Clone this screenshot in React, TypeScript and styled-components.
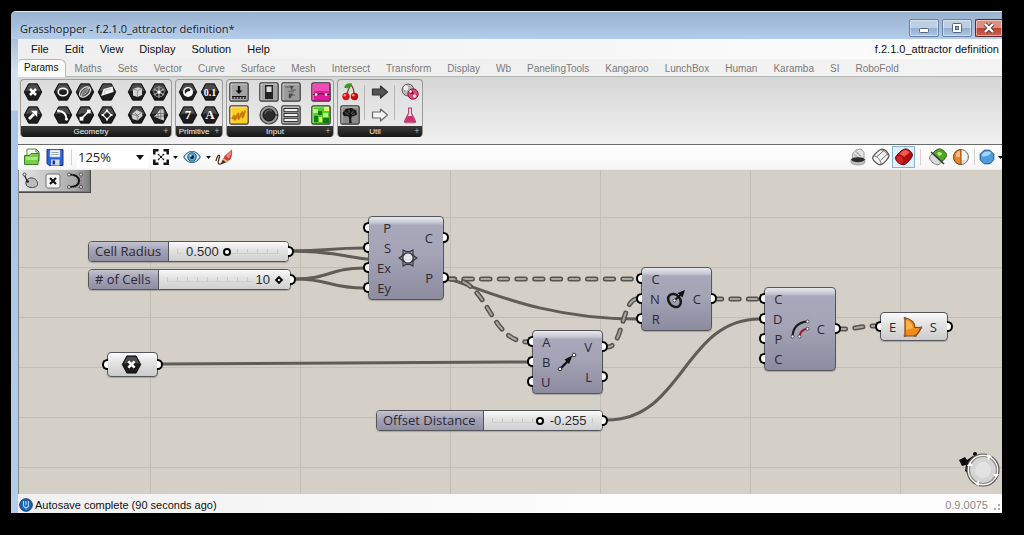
import React from "react";
import styled, { createGlobalStyle, css } from "styled-components";

const GlobalStyle = createGlobalStyle`
  *, *::before, *::after { box-sizing: border-box; }
  body { margin: 0; background: #000; }
  button, input, select, output { font: inherit; color: inherit; }
`;

const UI_FONT = `"Open Sans", "Noto Sans", sans-serif`;
const MENU_FONT = `"Liberation Sans", Arial, sans-serif`;

/* ---------- window frame ---------- */

const Desktop = styled.div`
  min-height: 100vh;
  display: flex;
  padding: 11px 22px 22px 11px;
  background: #000;
`;

const Window = styled.div`
  flex: 1;
  min-width: 0;
  display: flex;
  flex-direction: column;
  border-radius: 5px 0 0 0;
  border-top: 1px solid #dfe7f0;
  overflow: hidden;
  background: linear-gradient(#a9c1dc 0, #a6c0dc 27px, #d3e0ee 60px, #d3e0ee 98px, #a9c4e6 99px, #b4cdec 100%);
`;

const TitleBar = styled.header`
  height: 27px;
  display: flex;
  align-items: center;
  justify-content: space-between;
  padding-left: 9px;
  background: linear-gradient(#9bb3d0, #a3bddb 50%, #b3cdea);
`;

const Title = styled.h1`
  margin: 0;
  padding-top: 6px;
  font: 400 11px/18px ${UI_FONT};
  color: #16202e;
  white-space: nowrap;
  text-shadow: 0 0 5px rgba(255, 255, 255, 0.7);
`;

const Captions = styled.div`
  display: flex;
  gap: 3px;
  padding-top: 5px;
`;

const CaptionButton = styled.button<{ $close?: boolean }>`
  width: ${(p) => (p.$close ? 27 : 30)}px;
  height: 18px;
  padding: 0;
  display: grid;
  place-items: center;
  border: 1px solid #6880a0;
  border-radius: 2px;
  box-shadow: inset 0 0 0 1px rgba(255, 255, 255, 0.45);
  background: linear-gradient(#bccfe4 50%, #92afd0 50%, #abc6e4);
  ${(p) =>
    p.$close &&
    css`
      border-color: #5c2a2c;
      border-right: 0;
      border-radius: 2px 0 0 2px;
      background: linear-gradient(#dc8e80 50%, #c04230 50%, #cf6350);
    `}
`;

const Client = styled.div`
  flex: 1;
  margin-left: 7px;
  display: flex;
  flex-direction: column;
  min-width: 0;
  background: #f0f0f0;
`;

/* ---------- menu and tabs ---------- */

const MenuBar = styled.nav`
  height: 20px;
  display: flex;
  align-items: center;
  gap: 16px;
  padding: 0 3px 0 13px;
  background: linear-gradient(90deg, #efefef, #fdfdfd);
  font: 11px/14px ${MENU_FONT};
  color: #111;
`;

const MenuItem = styled.button`
  padding: 0;
  border: 0;
  background: none;
`;

const FileName = styled.span`
  margin-left: auto;
  white-space: nowrap;
`;

const TabStrip = styled.div`
  height: 18px;
  display: flex;
  align-items: flex-end;
  border-bottom: 1px solid #b4b8b4;
  background: linear-gradient(90deg, #eee, #f3f3f3);
`;

const Tab = styled.button<{ $active?: boolean }>`
  height: 17px;
  padding: 2px 8px 0;
  border: 0;
  background: none;
  font: 10px/14px ${MENU_FONT};
  color: #7a7a7a;
  white-space: nowrap;
  ${(p) =>
    p.$active &&
    css`
      height: 18px;
      margin-bottom: -1px;
      padding: 0 7px 2px 6px;
      border: 1px solid #b4b8b4;
      border-bottom: 0;
      border-left: 0;
      border-radius: 4px 6px 0 0;
      background: #fafafa;
      color: #111;
    `}
`;

/* ---------- ribbon ---------- */

const Ribbon = styled.div`
  height: 68px;
  display: flex;
  align-items: flex-start;
  gap: 3px;
  padding: 2px;
  border-bottom: 1px solid #6c6c6c;
  background: linear-gradient(#d6d6d6, #f1f1f1);
`;

const Panel = styled.section`
  height: 58px;
  display: flex;
  flex-direction: column;
  border: 1px solid #9c9c9c;
  border-bottom: 0;
  border-radius: 4px;
  overflow: hidden;
  background: linear-gradient(#dcdcdc, #ececec);
`;

const PanelBody = styled.div`
  flex: 1;
  display: flex;
  padding: 0 1px;
`;

const ToolGrid = styled.div<{ $cols: number }>`
  display: grid;
  grid-template-columns: repeat(${(p) => p.$cols}, 22px);
  grid-auto-rows: 23px;
  & + & {
    margin-left: 8px;
    position: relative;
  }
  & + &::before {
    content: "";
    position: absolute;
    left: -5px;
    top: 5px;
    height: 35px;
    width: 1px;
    background: #b4b4b4;
  }
`;

const ToolButton = styled.button`
  padding: 0;
  border: 0;
  background: none;
  display: grid;
  place-items: center;
  svg { display: block; }
`;

const PanelTitle = styled.h2`
  height: 11px;
  margin: 0;
  display: grid;
  grid-template-columns: 1fr 10px;
  text-align: center;
  background: linear-gradient(#3a3a3a, #161616);
  font: 400 8px/11px ${MENU_FONT};
  color: #f2f2f2;
`;

const Expand = styled.button`
  padding: 0;
  border: 0;
  background: none;
  font-size: 9px;
  line-height: 11px;
  color: #bbb;
`;

/* ---------- canvas toolbar ---------- */

const Toolbar = styled.div`
  height: 25px;
  display: flex;
  align-items: center;
  padding-left: 2px;
  background: linear-gradient(#fff, #f6f6f6);
  border-bottom: 1px solid #eee;
`;

const BarButton = styled.button<{ $on?: boolean; $w?: number }>`
  width: ${(p) => p.$w ?? 23}px;
  height: 22px;
  flex: none;
  padding: 0;
  border: 1px solid ${(p) => (p.$on ? "#7fb4e0" : "transparent")};
  background: ${(p) => (p.$on ? "#e3f0fb" : "none")};
  display: grid;
  place-items: center;
  svg { display: block; }
`;

const Divider = styled.span<{ $tight?: boolean }>`
  width: 1px;
  height: 16px;
  margin: 0 ${(p) => (p.$tight ? 2 : 5)}px;
  background: #d2d2d2;
`;

const ZoomBox = styled.label`
  position: relative;
  width: 72px;
  height: 21px;
  background: #fff;
  svg {
    position: absolute;
    right: 5px;
    top: 8px;
    pointer-events: none;
  }
`;

const ZoomSelect = styled.select`
  width: 100%;
  height: 100%;
  padding: 0 1px;
  border: 0;
  appearance: none;
  background: transparent;
  font: 13px/20px ${UI_FONT};
  color: #222;
`;

const Spacer = styled.span`
  flex: 1;
`;

/* ---------- canvas ---------- */

const Canvas = styled.main`
  position: relative;
  flex: 1;
  min-height: 324px;
  overflow: hidden;
  border-left: 1px solid #8b8b86;
  background-color: #d4d0c8;
  background-image: linear-gradient(90deg, #c2beb6 1px, transparent 1px),
    linear-gradient(#c2beb6 1px, transparent 1px);
  background-size: 150px 50px;
  background-position: 131px 47px;
  font: 13px/20px ${UI_FONT};
  color: #2a2a33;
`;

const Wires = styled.svg`
  position: absolute;
  inset: 0;
  width: 100%;
  height: 100%;
`;

const Markers = styled.div`
  position: absolute;
  left: -1px;
  top: 0;
  height: 23px;
  display: flex;
  align-items: center;
  padding: 0 4px 0 1px;
  border: 1px solid #4a4a4a;
  border-top: 0;
  box-shadow: inset -1px -1px 0 #777;
  background: linear-gradient(90deg, #e6e6e6, #a9a9a9 80%, #7d7d7d);
`;

const Compass = styled.svg`
  position: absolute;
  right: 2px;
  bottom: 7px;
`;

const place = css<{ $x: number; $y: number; $w: number }>`
  position: absolute;
  left: ${(p) => p.$x - 1}px;
  top: ${(p) => p.$y}px;
  width: ${(p) => p.$w}px;
`;

const NodeBox = styled.div<{ $x: number; $y: number; $w: number; $h: number; $light?: boolean }>`
  ${place}
  height: ${(p) => p.$h}px;
  display: flex;
  padding: 1px 0;
  border: 1px solid #55555c;
  border-radius: 4px;
  box-shadow: 0 1px 1px rgba(0, 0, 0, 0.2);
  background: ${(p) =>
    p.$light
      ? "linear-gradient(#fbfbfb, #e6e6e6 35%, #cbcbcb)"
      : "linear-gradient(#e8e8ee 0, #c6c6d2 6px, #a9a8ba 8px, #a5a4b7 45%, #8d8b9f)"};
`;

const PortColumn = styled.div<{ $out?: boolean }>`
  display: flex;
  flex-direction: column;
  align-items: stretch;
`;

const halfRing = css<{ $out?: boolean }>`
  content: "";
  position: absolute;
  top: 50%;
  margin-top: -6px;
  width: 6px;
  height: 11px;
  border: 2px solid #000;
  background: #fff;
  ${(p) =>
    p.$out
      ? "right: -6px; border-left: 0; border-radius: 0 6px 6px 0;"
      : "left: -6px; border-right: 0; border-radius: 6px 0 0 6px;"}
`;

const Port = styled.span<{ $out?: boolean }>`
  position: relative;
  flex: 1;
  display: flex;
  align-items: center;
  justify-content: flex-end;
  line-height: 20px;
  padding: ${(p) => (p.$out ? "0 10px 0 0" : "0 0 0 8px")};
  &::before { ${halfRing} }
`;

const Glyph = styled.span`
  flex: 1;
  display: grid;
  place-items: center;
  svg { display: block; }
`;

const SliderBox = styled.div<{ $x: number; $y: number; $w: number; $out?: boolean }>`
  ${place}
  height: 21px;
  display: flex;
  border: 1px solid #55555c;
  border-radius: 4px;
  box-shadow: 0 1px 1px rgba(0, 0, 0, 0.2);
  &::after { ${halfRing} }
`;

const SliderLabel = styled.label`
  padding: 0 7px 0 6px;
  border-right: 1px solid #55555c;
  border-radius: 3px 0 0 3px;
  background: linear-gradient(#c3c3d0, #a3a2b6 45%, #8f8da2);
  line-height: 19px;
  white-space: nowrap;
`;

const SliderBody = styled.div`
  position: relative;
  flex: 1;
  border-radius: 0 3px 3px 0;
  background: linear-gradient(#fafafa, #e4e4e4 40%, #cfcfcf);
  &::before {
    content: "";
    position: absolute;
    left: 8px;
    right: 9px;
    top: 7px;
    height: 5px;
    border-bottom: 1px solid #cdcdcd;
    background: repeating-linear-gradient(90deg, #c8c8c8 0 1px, transparent 1px 10px);
  }
`;

const SliderValue = styled.output<{ $left: number }>`
  position: absolute;
  left: ${(p) => p.$left}px;
  top: 0;
  bottom: 0;
  padding: 0 4px;
  background: inherit;
  font: 13px/19px ${MENU_FONT};
`;

const Range = styled.input<{ $diamond?: boolean }>`
  position: absolute;
  left: 4px;
  top: 0;
  width: calc(100% - 12px);
  height: 19px;
  margin: 0;
  appearance: none;
  background: transparent;
  &::-webkit-slider-thumb {
    appearance: none;
    box-sizing: border-box;
    width: ${(p) => (p.$diamond ? 6 : 8)}px;
    height: ${(p) => (p.$diamond ? 6 : 8)}px;
    border: 2px solid #000;
    border-radius: ${(p) => (p.$diamond ? 0 : "50%")};
    background: #fff;
    transform: ${(p) => (p.$diamond ? "rotate(45deg)" : "none")};
  }
`;

/* ---------- status bar ---------- */

const StatusBar = styled.footer`
  height: 19px;
  display: flex;
  align-items: center;
  gap: 2px;
  padding: 2px 0 0 1px;
  background: linear-gradient(90deg, #f0f0f0, #fdfdfd 60%);
  font: 11px/14px ${MENU_FONT};
  color: #111;
`;

const Version = styled.span`
  margin-left: auto;
  padding-right: 4px;
  color: #8a8a8a;
`;

/* ---------- icons ---------- */

const Hex = ({ children, size = 20 }: { children?: React.ReactNode; size?: number }) => (
  <svg width={size} height={size} viewBox="0 0 20 20">
    <path d="M5.6 1.8h8.8L18.8 10l-4.4 8.2H5.6L1.2 10z" fill="#1d1d1d" stroke="#000" strokeWidth=".8" strokeLinejoin="round" />
    <path d="M6 2.6h8L17.6 9.4C13 8 7 8 2.4 9.4z" fill="#4c4c4c" />
    {children}
  </svg>
);

const Tile = ({ fill = "#a3a3a3", children }: { fill?: string; children?: React.ReactNode }) => (
  <svg width="20" height="20" viewBox="0 0 20 20">
    <rect x=".8" y=".8" width="18.4" height="18.4" rx="1.6" fill={fill} stroke="#3c3c3c" strokeWidth="1.2" />
    <path d="M2 18V2h16" fill="none" stroke="#fff" strokeOpacity=".5" />
    {children}
  </svg>
);

const Cross = () => <path d="M7 7l6 6M13 7l-6 6" stroke="#fff" strokeWidth="2.5" />;

const hexIcons: Record<string, React.ReactNode> = {
  Point: <Cross />,
  Vector: (
    <>
      <path d="M6 14l5-5" stroke="#fff" strokeWidth="2.8" />
      <path d="M8 5.800h6.200V12z" fill="#fff" />
    </>
  ),
  Circle: <ellipse cx="10" cy="10" rx="4.8" ry="3.8" fill="none" stroke="#fff" strokeWidth="1.6" />,
  Arc: (
    <>
      <path d="M5 6c5 0 8.400 3 8.600 8.600" fill="none" stroke="#fff" strokeWidth="1.900" />
      <circle cx="5.400" cy="6" r="1.400" fill="#fff" />
      <circle cx="13.500" cy="14.300" r="1.400" fill="#fff" />
    </>
  ),
  Ellipse: (
    <>
      <ellipse cx="10" cy="10" rx="6.400" ry="4" transform="rotate(-40 10 10)" fill="#4a4a4a" stroke="#ddd" strokeWidth="1.200" />
      <path d="M6 13.500c1-4 3.500-6.500 8-7.500-1.500 4.500-4 7-8 7.500z" fill="#777" stroke="#ccc" strokeWidth=".700" />
    </>
  ),
  Line: (
    <>
      <path d="M6.500 13.500l7-7" stroke="#fff" strokeWidth="1.700" />
      <rect x="4.600" y="11.800" width="3.800" height="3.800" fill="#fff" />
      <rect x="12" y="4.600" width="3.600" height="3.600" fill="#fff" />
    </>
  ),
  Plane: (
    <>
      <path d="M4 14l2.500-7 9.200-2.500.8 5.500z" fill="#f2f2f2" />
      <path d="M7 12l1-3.600 6-1.500" stroke="#aaa" strokeWidth=".700" fill="none" />
    </>
  ),
  Rectangle: (
    <>
      <path d="M10 5.800l4.200 4.200-4.200 4.200L5.800 10z" fill="none" stroke="#ddd" strokeWidth="1.300" />
      <path d="M10 4.500v2.500M10 13v2.500M4.500 10H7M13 10h2.500" stroke="#fff" strokeWidth="2.200" />
    </>
  ),
  Box: (
    <>
      <path d="M6 7l5-1.800 4 1.300v6.500l-4.500 2L6 13.500z" fill="#d6d6d6" />
      <path d="M6 7l4.500 1.500V15M10.500 8.500L15 6.500" stroke="#888" strokeWidth=".8" fill="none" />
    </>
  ),
  Mesh: (
    <>
      <path d="M10 4v12M4.800 7l10.400 6M15.200 7L4.800 13" stroke="#bbb" strokeWidth="1.200" />
      <path d="M7 5.600h6L15.500 10 13 14.400H7L4.500 10z" fill="none" stroke="#888" />
      <circle cx="10" cy="10" r="1.600" fill="#fff" />
    </>
  ),
  Brep: (
    <>
      <path d="M4.500 9.500l5-4.500 5.500 2.500.5 3.500-5 4.500L5.500 14z" fill="#d2d2d2" />
      <path d="M5 9.500l5 1 4.500-3M10 10.500l.5 4.500M8 8l4 4" stroke="#777" strokeWidth=".9" fill="none" />
    </>
  ),
  Surface: (
    <>
      <path d="M11 4.500h3.500l.5 11-3-1-7-3 3-3z" fill="#d2d2d2" />
      <path d="M11.800 5v9.500M9 8v5M6 11.500l9-.5M8 8.500h7" stroke="#666" strokeWidth=".8" fill="none" />
    </>
  ),
  Boolean: (
    <>
      <circle cx="10" cy="10" r="5" fill="#fff" />
      <path d="M6.600 10a3.600 3.600 0 0 1 5.600-3.200c.8 2-1 2.600-2.400 2.800-1.300.2-1.800 1.800-2.400 2.200z" fill="#222" />
    </>
  ),
};

const HexText = ({ children, size }: { children: string; size: number }) => (
  <Hex>
    <text x="10" y="14.400" textAnchor="middle" fontFamily="Liberation Serif, serif" fontWeight="700" fontSize={size} fill="#fff">
      {children}
    </text>
  </Hex>
);

const hex = (name: string) => ({ name, icon: <Hex>{hexIcons[name]}</Hex> });

const inputIcons = {
  slider: (
    <Tile>
      <path d="M10 4v5" stroke="#111" strokeWidth="2.400" />
      <path d="M6.500 8.500h7L10 12z" fill="#111" />
      <path d="M3 14.500h14M4 14v3M7 14v3M10 14v3M13 14v3M16 14v3" stroke="#111" strokeWidth="1.200" />
    </Tile>
  ),
  graph: (
    <Tile fill="#ffcf2e">
      <path d="M3 14c1.500-2.500 2.200-3.500 2.700-3.200.8.500-1 3.800 0 4 1.200.2 2.500-6.800 3.700-6.400 1 .400-1 5.400.2 5.600 1.300.2 2.600-7.500 3.700-7.200 1 .300-.5 5.500.4 5.700.7.100 1.600-4.500 2.600-7" fill="none" stroke="#c77a00" strokeWidth="1.800" />
    </Tile>
  ),
  toggle: (
    <Tile>
      <rect x="6" y="3" width="8" height="14" fill="#222" />
      <rect x="7.500" y="4.500" width="5" height="5.500" fill="#ddd" />
    </Tile>
  ),
  scroller: (
    <Tile fill="#9c9c9c">
      <path d="M4 5h6M11 5v3h4M7 9.500h6M9 13h5" fill="none" stroke="#707070" strokeWidth="1.300" />
      <path d="M9 3.500l4 1-3 3zM8 11.500h4l-2.500 5-2-1z" fill="#4a4a4a" />
    </Tile>
  ),
  knob: (
    <svg width="20" height="20" viewBox="0 0 20 20">
      <circle cx="10" cy="10" r="9" fill="#9a9a9a" stroke="#444" strokeWidth="1.200" />
      <circle cx="10" cy="10" r="6" fill="#2a2a2a" stroke="#111" />
      <path d="M16 10h3" stroke="#111" />
      <path d="M6 9a4.500 4.500 0 0 1 7-3" fill="none" stroke="#666" strokeWidth="1.200" />
    </svg>
  ),
  list: (
    <Tile>
      {[3.5, 8.4, 13.3].map((y) => (
        <rect key={y} x="3" y={y} width="14" height="3.200" fill="#eee" stroke="#222" strokeWidth=".9" />
      ))}
    </Tile>
  ),
  gradient: (
    <Tile fill="#e2179a">
      <rect x="2" y="2" width="16" height="7" fill="#f04db4" />
      <path d="M2 12.500h2M6.500 12.500l3.500-1 3.500 1M16 12.500h2" fill="none" stroke="#4a0030" strokeWidth="1.200" />
      <circle cx="5" cy="12.500" r="1.300" fill="#fff" />
      <circle cx="15" cy="12.500" r="1.300" fill="#fff" />
    </Tile>
  ),
  image: (
    <Tile fill="#4fcf26">
      <path d="M2 4h5v4H2zM12 8h5v4h-5z" fill="#b9f58a" />
      <path d="M7 6h4v4H7zM3 11h4v6H3zM12 13h6v5h-6z" fill="#117a12" />
      <path d="M8 12h3v5H8zM13 2h5v4h-5z" fill="#e8ff6a" />
    </Tile>
  ),
};

const utilIcons = {
  cherry: (
    <svg width="20" height="20" viewBox="0 0 20 20">
      <path d="M7 12C8 8 9 5 11 3M14 12c0-4-1-7-3-9" fill="none" stroke="#6b4a1c" strokeWidth="1.200" />
      <path d="M4 5.500C5 2 8.500.500 12 1.500c-.5 3.500-4 6-8 4z" fill="#3f9a22" />
      <circle cx="6" cy="14.500" r="3.700" fill="#d81414" />
      <circle cx="14.500" cy="14.500" r="3.700" fill="#c40d0d" />
      <circle cx="4.800" cy="13.200" r="1.200" fill="#ff9c94" />
      <circle cx="13.300" cy="13.200" r="1.200" fill="#ff9c94" />
    </svg>
  ),
  tree: (
    <Tile fill="#8a8a8a">
      <path d="M9 18c.6-3 .4-5-1-7-2 .8-4.500.3-5-1.500C2 8 3 6.500 4.500 6 4.500 4 7 3 8.500 3.800 10 2.500 13 3 13.500 4.500c2-.2 3.500 1.200 3 3 1.200 1.500 0 3.300-2 3-1 1-2 1-2.500.8C11 13 11 15.500 11.800 18z" fill="#161616" />
      <path d="M5 7.500l3.500 2M13.500 6l-2.500 3M15 8.500l-3 1M9 5v3" stroke="#777" strokeWidth=".8" />
    </Tile>
  ),
  arrow: (fill: string, stroke: string) => (
    <svg width="18" height="16" viewBox="0 0 18 16">
      <path d="M1.500 5h8V2l7 6-7 6v-3h-8z" fill={fill} stroke={stroke} strokeWidth="1.200" strokeLinejoin="round" />
    </svg>
  ),
  bubbles: (
    <svg width="20" height="20" viewBox="0 0 20 20">
      <circle cx="8" cy="8" r="6" fill="#b5b5b5" stroke="#5e5e5e" />
      <circle cx="6" cy="6" r="2.400" fill="#eee" />
      <circle cx="13" cy="12" r="5.200" fill="#d9487e" stroke="#8f1745" />
      <path d="M9 8.500c2-1 4.500 0 4.800 3.500-2 .8-5-.2-4.800-3.500z" fill="#7d1038" />
      <circle cx="14.500" cy="14" r="1.700" fill="#ffd9e6" />
      <circle cx="10.500" cy="9.500" r="1.300" fill="#fff" />
    </svg>
  ),
  flask: (
    <svg width="18" height="20" viewBox="0 0 18 20">
      <path d="M7 3h4M7.600 3v5L3.600 16c-.4 1 .2 1.700 1 1.700h8.800c.9 0 1.400-.8 1-1.700l-4-8V3" fill="#f7e3eb" stroke="#a3456c" strokeWidth="1.100" />
      <path d="M6.400 11h5.200l2.400 5c.2.600 0 1.100-.6 1.100H4.600c-.6 0-.8-.5-.6-1.100z" fill="#d5306e" />
    </svg>
  ),
};

type Tool = { name: string; icon: React.ReactNode };

const panels: { title: string; groups: Tool[][] }[] = [
  {
    title: "Geometry",
    groups: [
      ["Point", "Vector"].map(hex),
      ["Circle", "Ellipse", "Plane", "Arc", "Line", "Rectangle"].map(hex),
      ["Box", "Mesh", "Brep", "Surface"].map(hex),
    ],
  },
  {
    title: "Primitive",
    groups: [
      [
        hex("Boolean"),
        { name: "Domain", icon: <HexText size={10}>0.1</HexText> },
        { name: "Integer", icon: <HexText size={13}>7</HexText> },
        { name: "Text", icon: <HexText size={13}>A</HexText> },
      ],
    ],
  },
  {
    title: "Input",
    groups: [
      [
        { name: "Number Slider", icon: inputIcons.slider },
        { name: "Graph Mapper", icon: inputIcons.graph },
      ],
      [
        { name: "Toggle", icon: inputIcons.toggle },
        { name: "Digit Scroller", icon: inputIcons.scroller },
        { name: "Control Knob", icon: inputIcons.knob },
        { name: "Value List", icon: inputIcons.list },
      ],
      [
        { name: "Gradient", icon: inputIcons.gradient },
        { name: "Image Sampler", icon: inputIcons.image },
      ],
    ],
  },
  {
    title: "Util",
    groups: [
      [
        { name: "Cherry Picker", icon: utilIcons.cherry },
        { name: "Param Viewer", icon: utilIcons.tree },
      ],
      [
        { name: "Data Input", icon: utilIcons.arrow("#555", "#333") },
        { name: "Data Output", icon: utilIcons.arrow("#f4f4f4", "#666") },
      ],
      [
        { name: "Cluster", icon: utilIcons.bubbles },
        { name: "Galapagos", icon: utilIcons.flask },
      ],
    ],
  },
];

const Caret = ({ w = 5 }: { w?: number }) => (
  <svg width={w} height={w === 5 ? 3 : 5} viewBox="0 0 10 6">
    <path d="M0 0h10L5 6z" fill="#111" />
  </svg>
);

const barIcons = {
  open: (
    <svg width="18" height="20" viewBox="0 0 18 20">
      <path d="M4 2h9l3 3v9H4z" fill="#fbfff6" stroke="#4d8a35" />
      <path d="M13 2v3h3" fill="none" stroke="#4d8a35" />
      <path d="M1.500 8.500h5l1.500-2h8L15 17.500H1.500z" fill="#7ccc4c" stroke="#3a8424" />
      <path d="M3 10h12l-.5 3H3z" fill="#a9e583" />
    </svg>
  ),
  save: (
    <svg width="18" height="19" viewBox="0 0 18 19">
      <path d="M1 1.500h16v16H3l-2-2z" fill="#2d62d2" stroke="#163a8c" />
      <rect x="4" y="2" width="10" height="7" fill="#f2f5fa" stroke="#9db4dc" strokeWidth=".6" />
      <path d="M5.500 4.500h7M5.500 6.500h7" stroke="#9aa4b4" />
      <rect x="5" y="11.500" width="8.500" height="6" fill="#d7dbe4" />
      <rect x="6.500" y="12.500" width="2.600" height="4" fill="#163a8c" />
    </svg>
  ),
  frame: (
    <svg width="16" height="16" viewBox="0 0 16 16">
      <path d="M1.300 5.500V1.300h4.200M10.500 1.300h4.200v4.200M14.700 10.500v4.200h-4.200M5.500 14.700H1.300v-4.200" fill="none" stroke="#111" strokeWidth="2.500" />
      <path d="M5 5l1.600 1.600M11 5L9.400 6.600M5 11l1.600-1.600M11 11L9.400 9.400" stroke="#111" strokeWidth="1.200" />
      <circle cx="8" cy="8" r="1.300" fill="#111" />
    </svg>
  ),
  eye: (
    <svg width="18" height="14" viewBox="0 0 18 14">
      <path d="M.8 7C3 3 6 1.500 9 1.500S15 3 17.200 7C15 11 12 12.500 9 12.500S3 11 .8 7z" fill="#e9f4fb" stroke="#3d6f92" strokeWidth="1.200" />
      <circle cx="9" cy="7" r="4.300" fill="#58aede" stroke="#1d5c86" />
      <circle cx="9" cy="7" r="2" fill="#0a1f30" />
      <circle cx="7.800" cy="5.800" r=".9" fill="#fff" />
    </svg>
  ),
  brush: (
    <svg width="18" height="18" viewBox="0 0 18 18">
      <path d="M1 13c.5-3 2.500-7 3.500-5.500S2 13.500 3.500 15.500c1 1 2.500.5 4-.5" fill="none" stroke="#5a2a12" strokeWidth="1.300" />
      <path d="M8 13l1.500-5L17 1.500c.5 4 0 8-2.500 11z" fill="#d23a34" />
      <path d="M11 8l5.500-5.500c0 3-1 5.500-3 8z" fill="#f08a7c" />
      <path d="M5.500 16.500l3-6.500 4.800 3.600z" fill="#4a2a1a" />
      <path d="M8.500 10l4.800 3.600-2 .9-3.600-2.700z" fill="#e0b48c" />
    </svg>
  ),
  noPreview: (
    <svg width="18" height="18" viewBox="0 0 18 18">
      <path d="M3.500 10V6L7 2l5-1 3 3.500V10z" fill="#e4e4e4" stroke="#9c9c9c" />
      <path d="M5 6.500l5 3.500M7 3.500l5 5" stroke="#aaa" strokeWidth="1.400" />
      <path d="M2 11v3c0 4 14 4 14 0v-3z" fill="#bdbdbd" stroke="#8a8a8a" strokeWidth=".6" />
      <path d="M2 11.500c2-3 12-3 14 0-2 3.500-12 3.500-14 0z" fill="#2c2c2c" />
    </svg>
  ),
  wire: (
    <svg width="20" height="18" viewBox="0 0 20 18">
      <path d="M1.500 10C2 7.500 8 1.800 10.500 1.200s6.500 3 7.500 5.800c.5 2.500-5.500 9-8 9.700S2 13 1.500 10z" fill="#f3f3f3" stroke="#555" strokeWidth="1.200" />
      <path d="M3 8c2.500-.5 7 4 7 8.500M5.500 9L13 2.500M9.500 12.500L17 5.500M10 2c3 0 6.500 3.500 7.500 6.500" fill="none" stroke="#777" />
    </svg>
  ),
  shaded: (
    <svg width="20" height="18" viewBox="0 0 20 18">
      <path d="M1.500 10C2 7 8 1.500 11 1s6.500 2.500 7.500 5.500c.5 3-6 9.500-8.500 10.200S2 13 1.500 10z" fill="#b40f0f" stroke="#6b0505" />
      <path d="M5 6.500C7 4 10 1.800 11.500 2s3.500 1.500 4 2.500L10 9C9 7.500 7 6.500 5 6.500z" fill="#ee5a50" />
      <ellipse cx="6" cy="11.600" rx="3.600" ry="5" transform="rotate(-38 6 11.600)" fill="#cf2420" stroke="#7a0606" strokeWidth=".7" />
    </svg>
  ),
  selected: (
    <svg width="20" height="18" viewBox="0 0 20 18">
      <path d="M1.500 10C2 7 8 1.500 11 1s6.500 2.500 7.500 5.500c.5 3-6 9.500-8.500 10.200S2 13 1.500 10z" fill="#dadada" stroke="#777" />
      <path d="M4.500 5.500C6.500 3 9.500 1.200 11 1s6.500 2.500 7.500 5.500c.2 1.800-2 4.500-4.500 6.800z" fill="#4fa822" stroke="#2f7511" />
      <path d="M9 5c1.500-1.500 3.500-1.500 5 .5 0 1.500-2 2.500-3 2.500z" fill="#b6ea8c" />
      <path d="M3 4l13 12" stroke="#333" strokeWidth="1.400" />
    </svg>
  ),
  sphere: (
    <svg width="18" height="18" viewBox="0 0 18 18">
      <circle cx="9" cy="9" r="7.500" fill="#dedede" stroke="#777" />
      <path d="M9 2a7 7 0 0 1 5 10L9 12z" fill="#f8f8f8" />
      <path d="M9 1.500a7.500 7.500 0 0 0 0 15z" fill="#e8842a" stroke="#8c4a10" />
      <path d="M4 6c1-2 2.500-3 4-3.200V9H4z" fill="#f9bf86" />
    </svg>
  ),
  blue: (
    <svg width="16" height="16" viewBox="0 0 16 16">
      <path d="M5.200 1.200h5.600l4 4v5.600l-4 4H5.200l-4-4V5.200z" fill="#4a9fe2" stroke="#1c4f86" />
      <path d="M3 5.500c1-2 3-3 5.500-3 1.500 0 3 .5 3.500 1.500C11 6 6 8 3 7.500z" fill="#a9d6f8" />
    </svg>
  ),
};

/* ---------- wires ---------- */

type Pt = [number, number];
type WireSpec = { from: Pt; to: Pt; tree?: boolean; bend?: [Pt, Pt] };

const wires: WireSpec[] = [
  { from: [275, 81], to: [346, 78] },
  { from: [275, 81], to: [382, 91] },
  { from: [277, 109], to: [346, 98] },
  { from: [277, 109], to: [346, 118] },
  { from: [144, 194], to: [510, 192] },
  { from: [431, 109], to: [619, 149], bend: [[463, 118], [522, 149]] },
  { from: [589, 250], to: [742, 149] },
  { from: [432, 109], to: [619, 109], tree: true },
  { from: [432, 109], to: [510, 172], tree: true },
  { from: [590, 177], to: [619, 129], tree: true },
  { from: [699, 129], to: [742, 129], tree: true },
  { from: [823, 159], to: [858, 156], tree: true },
];

const curve = ({ from: [x1, y1], to: [x2, y2], bend }: WireSpec) => {
  const pull = Math.max((x2 - x1) / 2, 12);
  const [a, b] = bend ?? [[x1 + pull, y1], [x2 - pull, y2]];
  return `M${x1} ${y1}C${a.join(" ")} ${b.join(" ")} ${x2} ${y2}`;
};

const Wire = (w: WireSpec) => {
  const d = curve(w);
  if (!w.tree) return <path d={d} stroke="#5f5d56" strokeWidth="3" />;
  return (
    <g strokeLinecap="round" strokeDasharray="8.500 9.200" strokeDashoffset="4">
      <path d={d} stroke="#56544e" strokeWidth="5" />
      <path d={d} stroke="#aaa79f" strokeWidth="2" />
    </g>
  );
};

/* ---------- nodes ---------- */

type NodeProps = {
  x: number;
  y: number;
  w: number;
  h: number;
  inputs: string[];
  outputs: string[];
  light?: boolean;
  children: React.ReactNode;
};

const Node = ({ x, y, w, h, inputs, outputs, light, children }: NodeProps) => (
  <NodeBox $x={x} $y={y} $w={w} $h={h} $light={light}>
    <PortColumn>
      {inputs.map((t, i) => (
        <Port key={i}>{t}</Port>
      ))}
    </PortColumn>
    <Glyph>{children}</Glyph>
    <PortColumn>
      {outputs.map((t, i) => (
        <Port key={i} $out>{t}</Port>
      ))}
    </PortColumn>
  </NodeBox>
);

type SliderProps = {
  id: string;
  label: string;
  x: number;
  y: number;
  w: number;
  min: number;
  max: number;
  step: number;
  initial: number;
  valueLeft: number;
  digits?: number;
  diamond?: boolean;
};

const Slider = (p: SliderProps) => {
  const [value, setValue] = React.useState(p.initial);
  return (
    <SliderBox $x={p.x} $y={p.y} $w={p.w} $out>
      <SliderLabel htmlFor={p.id}>{p.label}</SliderLabel>
      <SliderBody>
        <SliderValue htmlFor={p.id} $left={p.valueLeft}>{value.toFixed(p.digits ?? 3)}</SliderValue>
        <Range
          id={p.id}
          type="range"
          min={p.min}
          max={p.max}
          step={p.step}
          value={value}
          $diamond={p.diamond}
          onChange={(e) => setValue(Number(e.target.value))}
        />
      </SliderBody>
    </SliderBox>
  );
};

const tabs = [
  "Params", "Maths", "Sets", "Vector", "Curve", "Surface", "Mesh", "Intersect", "Transform",
  "Display", "Wb", "PanelingTools", "Kangaroo", "LunchBox", "Human", "Karamba", "SI", "RoboFold",
];

export default function App() {
  return (
    <>
      <GlobalStyle />
      <Desktop>
        <Window>
          <TitleBar>
            <Title>Grasshopper - f.2.1.0_attractor definition*</Title>
            <Captions>
              <CaptionButton aria-label="Minimize">
                <svg width="12" height="12" viewBox="0 0 12 12">
                  <rect x="1.500" y="6.500" width="9" height="4" rx="1" fill="#fff" stroke="#56657a" />
                </svg>
              </CaptionButton>
              <CaptionButton aria-label="Maximize">
                <svg width="12" height="12" viewBox="0 0 12 12">
                  <rect x="1.500" y="1.500" width="9" height="9" rx="1" fill="#fff" stroke="#56657a" />
                  <rect x="4.500" y="4.500" width="3" height="3" fill="#8fabcb" stroke="#56657a" />
                </svg>
              </CaptionButton>
              <CaptionButton aria-label="Close" $close>
                <svg width="12" height="12" viewBox="0 0 12 12">
                  <path d="M2 2l8 8M10 2l-8 8" stroke="#5a3a3c" strokeWidth="4" />
                  <path d="M2 2l8 8M10 2l-8 8" stroke="#fff" strokeWidth="2.400" />
                </svg>
              </CaptionButton>
            </Captions>
          </TitleBar>

          <Client>
            <MenuBar>
              {["File", "Edit", "View", "Display", "Solution", "Help"].map((m) => (
                <MenuItem key={m}>{m}</MenuItem>
              ))}
              <FileName>f.2.1.0_attractor definition</FileName>
            </MenuBar>

            <TabStrip role="tablist">
              {tabs.map((t, i) => (
                <Tab key={t} role="tab" aria-selected={i === 0} $active={i === 0}>{t}</Tab>
              ))}
            </TabStrip>

            <Ribbon>
              {panels.map((p) => (
                <Panel key={p.title}>
                  <PanelBody>
                    {p.groups.map((g, i) => (
                      <ToolGrid key={i} $cols={g.length / 2}>
                        {g.map((t) => (
                          <ToolButton key={t.name} aria-label={t.name}>{t.icon}</ToolButton>
                        ))}
                      </ToolGrid>
                    ))}
                  </PanelBody>
                  <PanelTitle>
                    <span>{p.title}</span>
                    <Expand aria-label={`More ${p.title}`}>+</Expand>
                  </PanelTitle>
                </Panel>
              ))}
            </Ribbon>

            <Toolbar>
              <BarButton aria-label="Open">{barIcons.open}</BarButton>
              <BarButton aria-label="Save">{barIcons.save}</BarButton>
              <Divider />
              <ZoomBox aria-label="Zoom level">
                <ZoomSelect defaultValue="125%">
                  <option>100%</option>
                  <option>125%</option>
                  <option>150%</option>
                </ZoomSelect>
                <Caret w={8} />
              </ZoomBox>
              <BarButton aria-label="Zoom extents">{barIcons.frame}</BarButton>
              <BarButton aria-label="Zoom options" $w={7}><Caret /></BarButton>
              <BarButton aria-label="Named views" $w={26}>{barIcons.eye}</BarButton>
              <BarButton aria-label="View options" $w={7}><Caret /></BarButton>
              <BarButton aria-label="Sketch">{barIcons.brush}</BarButton>
              <Spacer />
              <BarButton aria-label="Do not draw preview">{barIcons.noPreview}</BarButton>
              <BarButton aria-label="Wireframe preview">{barIcons.wire}</BarButton>
              <BarButton aria-label="Shaded preview" $on>{barIcons.shaded}</BarButton>
              <Divider />
              <BarButton aria-label="Preview selected only">{barIcons.selected}</BarButton>
              <BarButton aria-label="Document preview">{barIcons.sphere}</BarButton>
              <Divider $tight />
              <BarButton aria-label="Preview mesh quality" $w={20}>{barIcons.blue}</BarButton>
              <BarButton aria-label="Quality options" $w={5}><Caret /></BarButton>
            </Toolbar>

            <Canvas>
              <Wires fill="none">
                <g transform="translate(-1 0)">
                  {wires.map((w, i) => (
                    <Wire key={i} {...w} />
                  ))}
                </g>
              </Wires>

              <Slider id="radius" label="Cell Radius" x={70} y={71} w={201} min={0} max={1} step={0.001} initial={0.5} valueLeft={13} />
              <Slider id="cells" label="# of Cells" x={70} y={99} w={203} min={0} max={10} step={1} initial={10} valueLeft={93} digits={0} diamond />
              <Slider id="offset" label="Offset Distance" x={358} y={240} w={227} min={-0.5} max={0} step={0.001} initial={-0.255} valueLeft={62} />

              <Node x={89} y={182} w={51} h={25} inputs={[""]} outputs={[""]} light>
                <Hex size={21}><Cross /></Hex>
              </Node>

              <Node x={350} y={46} w={76} h={84} inputs={["P", "S", "Ex", "Ey"]} outputs={["C", "P"]}>
                <svg width="20" height="20" viewBox="0 0 20 20">
                  <path d="M5 2l3 1.500h4L15 2l0 4 1 2 3 2-3 2-1 2v4l-3-1.500H8L5 18v-4l-1-2-3-2 3-2 1-2z" fill="#8e8ea0" stroke="#33333b" strokeWidth="1.100" />
                  <circle cx="10" cy="10" r="5.200" fill="#e4e4ea" stroke="#33333b" strokeWidth="1.300" />
                </svg>
              </Node>

              <Node x={514} y={160} w={71} h={64} inputs={["A", "B", "U"]} outputs={["V", "L"]}>
                <svg width="20" height="20" viewBox="0 0 20 20">
                  <path d="M3 17l9-9" stroke="#111" strokeWidth="2.400" />
                  <path d="M7.500 7.500l8-4-3.500 8.500z" fill="#111" />
                  <circle cx="3" cy="17" r="1.800" fill="#fff" stroke="#222" strokeWidth=".9" />
                  <circle cx="17" cy="3" r="1.800" fill="#fff" stroke="#222" strokeWidth=".9" />
                </svg>
              </Node>

              <Node x={623} y={97} w={71} h={64} inputs={["C", "N", "R"]} outputs={["C"]}>
                <svg width="20" height="20" viewBox="0 0 20 20">
                  <ellipse cx="8.500" cy="11.500" rx="5.600" ry="7.200" transform="rotate(-42 8.500 11.500)" fill="none" stroke="#1a1a1a" strokeWidth="2.600" />
                  <path d="M8 12l7-6.500" stroke="#111" strokeWidth="1.800" />
                  <path d="M11.500 4l7.500-3-2.500 7.500z" fill="#111" />
                  <circle cx="8.500" cy="11.500" r="1.500" fill="#fff" stroke="#222" strokeWidth=".7" />
                </svg>
              </Node>

              <Node x={746} y={117} w={72} h={84} inputs={["C", "D", "P", "C"]} outputs={["C"]}>
                <svg width="20" height="20" viewBox="0 0 20 20">
                  <path d="M2.500 17.500C3 9 8 3.500 17 2.500" fill="none" stroke="#1a1a1a" strokeWidth="2.200" />
                  <path d="M9.500 17.500C10 13.500 12.500 10.500 17 9.800" fill="none" stroke="#a0182c" strokeWidth="2" />
                  {[[2.5, 17.5], [17.5, 2.5], [9.5, 17.5], [17.5, 9.8]].map(([cx, cy]) => (
                    <circle key={`${cx}-${cy}`} cx={cx} cy={cy} r="1.500" fill="#fff" stroke="#333" strokeWidth=".8" />
                  ))}
                </svg>
              </Node>

              <Node x={862} y={142} w={68} h={29} inputs={["E"]} outputs={["S"]} light>
                <svg width="20" height="20" viewBox="0 0 20 20">
                  <path d="M2 1c6 1 9.500 4.500 10 9.500h6c-1 4-3.500 6.500-5.500 8.500H2z" fill="#f58a1c" stroke="#8a4608" strokeWidth="1.200" />
                  <path d="M3 3c4 1.500 6.500 4 7 8l-7 2z" fill="#ffb545" />
                  <path d="M.8 0h2.400v2.400H.8zM.8 17.600h2.400V20H.8zM16.800 9.400h2.400v2.400h-2.400zM11 17.600h2.400V20H11z" fill="#7d6248" />
                </svg>
              </Node>

              <Markers>
                <BarButton aria-label="Blob group" $w={22}>
                  <svg width="18" height="18" viewBox="0 0 18 18">
                    <path d="M4 12c-1-4 3-6.500 6-6 4 .5 5 3 5.500 5s-1 4.500-5 4.500-6-1-6.500-3.500z" fill="#bdbdbd" stroke="#444" />
                    <path d="M2 2l3.500 8" stroke="#222" strokeWidth="1.300" />
                    <circle cx="2.500" cy="2.500" r="1.500" fill="#eee" stroke="#222" strokeWidth=".8" />
                    <circle cx="5.600" cy="9.500" r="1.300" fill="#222" />
                  </svg>
                </BarButton>
                <BarButton aria-label="Point" $w={22}>
                  <svg width="16" height="16" viewBox="0 0 16 16">
                    <rect x="1" y="1" width="14" height="14" rx="2" fill="#f4f4f4" stroke="#777" />
                    <path d="M5 5l6 6M11 5l-6 6" stroke="#111" strokeWidth="2.200" />
                  </svg>
                </BarButton>
                <BarButton aria-label="Curve" $w={22}>
                  <svg width="18" height="18" viewBox="0 0 18 18">
                    <path d="M3 2.500c8 0 10 3 10 6.500s-2 6-10 6" fill="none" stroke="#111" strokeWidth="2" />
                    <path d="M3 2.500l12-.5M15 2v13M3 15.500h12" stroke="#666" strokeWidth=".8" strokeDasharray="1.500 1.500" />
                    {[[3, 2.5], [15, 2.5], [3, 15], [15, 15]].map(([cx, cy]) => (
                      <circle key={`${cx}-${cy}`} cx={cx} cy={cy} r="1.500" fill="#eee" stroke="#333" strokeWidth=".8" />
                    ))}
                  </svg>
                </BarButton>
              </Markers>

              <Compass width="42" height="36" viewBox="0 0 42 36">
                <path d="M1 9l6-3 2 3 6-4 4 3-9 14-3-2 1-6-4 1z" fill="#0a0a0a" />
                <circle cx="17" cy="3" r="2" fill="#0a0a0a" />
                <circle cx="25" cy="19" r="16" fill="#f6f6f6" stroke="#55544f" strokeWidth="1.200" />
                <circle cx="25" cy="19" r="13.500" fill="#d4d4d4" stroke="#8a8a86" strokeWidth="1.200" />
                <circle cx="25" cy="19" r="8" fill="#e2e2e2" />
                <path d="M29 3l1 6 4-4zM41 23l-6 0 3 4zM21 35l0-6-4 4zM9 15l6 0-3-4z" fill="#fff" />
              </Compass>
            </Canvas>

            <StatusBar>
              <svg width="14" height="14" viewBox="0 0 14 14">
                <circle cx="7" cy="7" r="6.300" fill="#1c62b4" stroke="#123a72" />
                <path d="M4.500 3v4a2.500 2.500 0 0 0 5 0V3M7 3v4M7 10v1.500" fill="none" stroke="#9fd8ff" strokeWidth="1.200" />
              </svg>
              <span>Autosave complete (90 seconds ago)</span>
              <Version>0.9.0075</Version>
              <svg width="8" height="10" viewBox="0 0 8 10">
                <path d="M4 4h2v2H4zM0 8h2v2H0zM4 8h2v2H4z" fill="#aaa" />
              </svg>
            </StatusBar>
          </Client>
        </Window>
      </Desktop>
    </>
  );
}
